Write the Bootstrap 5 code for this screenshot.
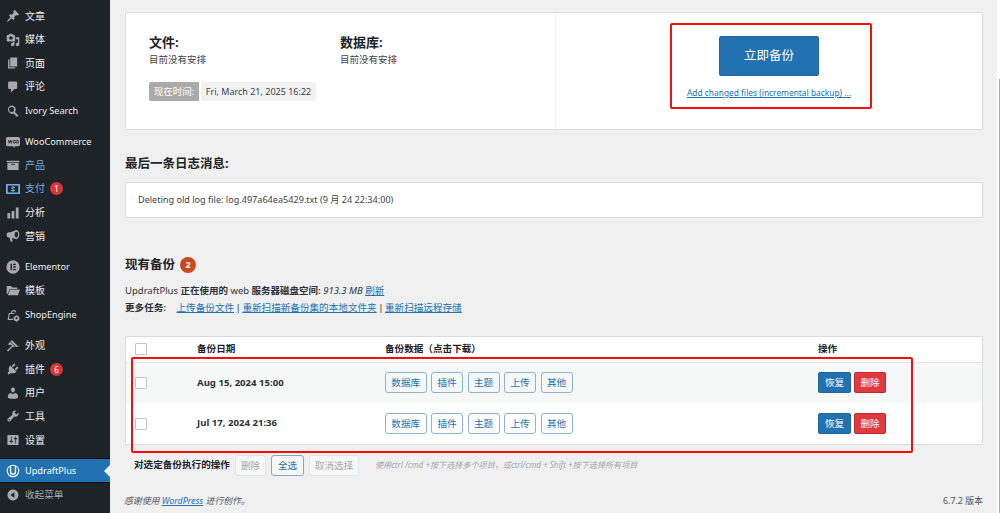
<!DOCTYPE html>
<html lang="zh-CN">
<head>
<meta charset="utf-8">
<title>UpdraftPlus</title>
<link href="https://cdn.jsdelivr.net/npm/bootstrap@5.3.0/dist/css/bootstrap.min.css" rel="stylesheet">
<style>
html,body{height:513px;overflow:hidden}
body{background:#f0f0f1;color:#3c434a;font:9.6px/1.3 "Noto Sans","Noto Sans CJK SC",sans-serif}
a{color:#2271b1}
.wp-side{width:110px;height:513px;flex:none;background:#1d2327;padding-top:4.4px;overflow:hidden}
.side-row{height:23.6px;flex:none;color:#f0f0f1;font-size:10px;text-decoration:none;padding-left:6px;gap:5px;position:relative;white-space:nowrap}
.side-row svg{width:14px;height:14px;fill:#a7aaad;flex:none}
.side-row.hue{color:#72aee6}
.side-row.hue-ico svg{fill:#72aee6}
.side-row .latin-name{font-size:9.2px}
.side-gap{height:7.6px;flex:none}
.side-row.now{background:#2271b1;color:#fff;box-shadow:0 -1px 0 #0c0f11,0 1px 0 #0c0f11;margin-top:-.6px}
.side-row.now svg{fill:#fff}
.side-row.now::after{content:"";position:absolute;right:0;top:6px;border:6px solid transparent;border-right-color:#f0f0f1;border-left:0}
.side-row.fold{color:#a7aaad;font-size:9.6px;margin-top:.6px}
.side-num{background:#d63638;color:#fff;width:13px;height:13px;border-radius:50%;font-size:8px;line-height:13px;text-align:center;margin-left:0}
.wp-body{width:887px;flex:none;padding:12px 14px 0 15px;position:relative}
.scroll-strip{width:3px;flex:none;background:#fff;padding-left:2px}
.scroll-thumb{height:434px;margin-top:79px;background:#a9a9a9}
.top-panel{height:118px;border:1px solid #dcdcde;border-radius:1px;background:#fff}
.top-left{width:430px;flex:none;padding:20px 23px;border-right:1px solid #f3f3f3}
.sched-col{width:191px}
.sched-title{font-size:13px;line-height:18px;font-weight:700;color:#1d2327}
.sched-sub{line-height:16px;font-size:9.5px;margin-top:1px}
.time-pill{margin-top:14px;height:19px;line-height:19px;font-size:9px;gap:2px}
.time-tag{background:#aaa;color:#fff;width:50px;text-align:center;border-radius:2px 0 0 2px;font-size:9.5px}
.time-val{background:#f1f1f1;width:115px;text-align:center;border-radius:0 2px 2px 0}
.top-right{padding-top:23px}
.now-btn{width:100px;height:40px;background:#2271b1;border:1px solid #1b669f;border-radius:2px;color:#fff;font-size:12.5px;line-height:38px;padding:0}
.now-link{margin-top:10px;line-height:13px;font-size:8.4px;white-space:nowrap}
.sect-h{font-size:12.5px;line-height:16px;font-weight:700;color:#1d2327;margin:0}
.log-h{margin-top:26px}
.log-box{margin-top:10px;height:36px;background:#fff;border:1px solid #dcdcde;padding:0 12px;line-height:34px;font-size:9.1px}
.have-h{margin-top:39px;font-size:12.5px;height:16px;gap:5px}
.have-num{width:16px;height:16px;border-radius:50%;background:#ca4a1f;color:#fff;font-size:9px;line-height:16px;text-align:center;font-weight:700}
.disk-line{margin-top:10px;line-height:16px;color:#2c3338;font-size:9.5px}
.disk-line b{font-weight:600}
.task-line{line-height:17px;color:#2c3338;font-size:9.6px;word-spacing:-1px}
.task-line b{font-weight:600;margin-right:9px}
.bk-wrap{margin-top:20px;background:#fff;border:1px solid #dcdcde;height:109px}
.bk-table{table-layout:fixed;margin:0;--bs-table-bg:transparent;width:100%;font-size:9.6px;color:#2c3338}
.bk-table th,.bk-table td{padding:0;vertical-align:middle;border:0;background:transparent;box-shadow:none}
.bk-table thead tr{height:25px;border-bottom:1px solid #e4e4e4}
.bk-table th{font-weight:600;color:#1d2327}
.bk-table th:first-child,.bk-table td:first-child{padding-left:9px}
.bk-table tbody tr{height:41px}
.bk-table tbody tr.shade{background:#f6f7f7}
.bk-date{font-weight:700;font-size:9.6px}
.box-tick{width:12px;height:12px;border:1px solid #c3c4c7;border-radius:1px;background:#fff;display:block}
.btn-line{gap:4.5px}
.part-btn{height:21px;border:1px solid #88b3d4;border-radius:3px;background:#f6f7f7;color:#2271b1;font-size:9.6px;line-height:19px;padding:0;width:32px;text-align:center}
.part-btn.wide{width:41.5px}
tr:not(.shade) .part-btn{background:#fff}
.act-pair{gap:3px}
.act-btn{height:21px;width:33px;padding:0;border-radius:2px;color:#fff;font-size:9.6px;line-height:19px}
.act-blue{background:#2271b1;border:1px solid #1b669f}
.act-red{background:#df3a3f;border:1px solid #c4272c;width:32px}
.bulk-line{margin-top:10px;padding-left:9px;height:21px;white-space:nowrap}
.bulk-name{font-weight:600;color:#1d2327;width:101px;font-size:9.6px}
.bulk-btn{height:21px;padding:0;font-size:9.6px;line-height:19px;border-radius:3px;text-align:center;background:#f6f7f7;border:1px solid #e4e5e6;color:#a7aaad;margin-right:5px}
.bulk-go{background:#f6f7f7;border-color:#7fa9ca;color:#2271b1}
.bulk-hint{color:#a0a5aa;font-style:italic;font-size:8.1px;margin-left:11px}
.wp-foot{margin-top:19px;margin-left:-1px;font-size:8.9px;font-style:italic;color:#50575e}
.wp-foot span:last-child{font-style:normal}
.mark-box{position:absolute;border:2px solid #f60d0d;border-radius:2px;pointer-events:none}
.mark-a{left:560px;top:23px;width:202px;height:86px}
.mark-b{left:21px;top:357px;width:782px;height:96px}
</style>
</head>
<body class="d-flex m-0">
<nav class="wp-side d-flex flex-column">
<a class="side-row d-flex align-items-center"><svg viewBox="0 0 20 20"><path d="M10.44 3.02l1.82-1.82 6.36 6.35-1.83 1.82c-1.05-.68-2.48-.57-3.41.36l-.75.75c-.92.93-1.04 2.35-.35 3.41l-1.83 1.82-2.41-2.41-2.8 2.79c-.42.42-3.38 2.71-3.8 2.29s1.86-3.39 2.28-3.81l2.79-2.79L4.1 9.36l1.83-1.82c1.05.69 2.48.57 3.4-.36l.75-.75c.93-.92 1.05-2.35.36-3.41z"/></svg><span>文章</span></a>
<a class="side-row d-flex align-items-center"><svg viewBox="0 0 20 20"><path d="M13 11V4c0-.55-.45-1-1-1h-1.67L9 1H5L3.67 3H2c-.55 0-1 .45-1 1v7c0 .55.45 1 1 1h10c.55 0 1-.45 1-1zM7 4.5c1.38 0 2.5 1.12 2.5 2.5S8.38 9.5 7 9.5 4.5 8.38 4.5 7 5.62 4.5 7 4.5zM14 6h5v10.5c0 1.38-1.12 2.5-2.5 2.5S14 17.88 14 16.5s1.12-2.5 2.5-2.5c.17 0 .34.02.5.05V9h-3V6zm-4 8.05V13h2v3.5c0 1.38-1.12 2.5-2.5 2.5S7 17.88 7 16.5 8.12 14 9.5 14c.17 0 .34.02.5.05z"/></svg><span>媒体</span></a>
<a class="side-row d-flex align-items-center"><svg viewBox="0 0 20 20"><path d="M6 15V2h10v13H6zm-1 1h8v2H3V5h2v11z"/></svg><span>页面</span></a>
<a class="side-row d-flex align-items-center"><svg viewBox="0 0 20 20"><path d="M5 2h9c1.1 0 2 .9 2 2v7c0 1.1-.9 2-2 2h-2l-5 5v-5H5c-1.1 0-2-.9-2-2V4c0-1.1.9-2 2-2z"/></svg><span>评论</span></a>
<a class="side-row d-flex align-items-center"><svg viewBox="0 0 20 20"><path d="M8 2a6 6 0 0 1 4.8 9.6l5 5-2 2-5-5A6 6 0 1 1 8 2zm0 2.4a3.6 3.6 0 1 0 0 7.2 3.6 3.6 0 0 0 0-7.2z"/></svg><span class="latin-name">Ivory Search</span></a>
<div class="side-gap"></div>
<a class="side-row d-flex align-items-center"><svg viewBox="0 0 20 20"><path fill-rule="evenodd" d="M2.5 3h15A2.5 2.5 0 0 1 20 5.5v8a2.5 2.5 0 0 1-2.5 2.5H12l1 2.5L9.500 16h-7A2.500 2.500 0 0 1 0 13.500v-8A2.500 2.500 0 0 1 2.500 3zM3 7l1 5h1l1-3 1 3h1l1-5H8l-.6 3L6.500 7h-1l-.9 3L4 7zm9 0a2.500 2.500 0 1 0 0 5 2.500 2.500 0 0 0 0-5zm0 1.300a1.200 1.200 0 1 1 0 2.400 1.200 1.200 0 0 1 0-2.400zM16 7a2.500 2.500 0 1 0 0 5 2.500 2.500 0 0 0 0-5zm0 1.300a1.200 1.200 0 1 1 0 2.400 1.200 1.200 0 0 1 0-2.400z"/></svg><span class="latin-name">WooCommerce</span></a>
<a class="side-row hue d-flex align-items-center"><svg viewBox="0 0 20 20"><path d="M19 4v2H1V4h18zM2 7h16v10H2V7zm11 3V9H7v1h6z"/></svg><span>产品</span></a>
<a class="side-row hue hue-ico d-flex align-items-center"><svg viewBox="0 0 20 20"><path fill-rule="evenodd" d="M1 3h18a1 1 0 0 1 1 1v12a1 1 0 0 1-1 1H1a1 1 0 0 1-1-1V4a1 1 0 0 1 1-1zm1.500 2v10h15V5zM9.200 5.800h1.600v1a3 3 0 0 1 2.200 1l-1 1a2 2 0 0 0-1.800-.6c-.9.100-1 .9-.2 1.200l1.400.5c1.700.6 1.700 3-.6 3.400v.9H9.200v-.9a3.500 3.500 0 0 1-2.400-1.200l1.100-1a2.300 2.300 0 0 0 2 .8c1 0 1.100-.9.300-1.200l-1.400-.5c-1.700-.6-1.600-3 .4-3.400z"/></svg><span>支付</span><span class="side-num">1</span></a>
<a class="side-row d-flex align-items-center"><svg viewBox="0 0 20 20"><path d="M18 18V2h-4v16h4zm-6 0V7H8v11h4zm-6 0v-8H2v8h4z"/></svg><span>分析</span></a>
<a class="side-row d-flex align-items-center"><svg viewBox="0 0 20 20"><path fill-rule="evenodd" d="M14.500 1.500c2.500 0 4.500 3 4.500 6.500s-2 6.500-4.500 6.500c-.6 0-1.200-.2-1.700-.5L8.500 12.700l1.300 5.300H6.500L5 12H3.500A3 3 0 0 1 1 9V7.500A3 3 0 0 1 3.500 4.500h3L12.800 2c.5-.3 1.100-.5 1.700-.5zm.3 2.300c-1.400 0-2.500 1.900-2.500 4.200s1.100 4.200 2.500 4.200 2.500-1.900 2.500-4.200-1.100-4.200-2.500-4.200z"/></svg><span>营销</span></a>
<div class="side-gap"></div>
<a class="side-row d-flex align-items-center"><svg viewBox="0 0 20 20"><path fill-rule="evenodd" d="M10 .5a9.500 9.500 0 1 1 0 19 9.500 9.500 0 0 1 0-19zM6.500 5.500v9h2v-9zm3.500 0v1.800h4V5.500zm0 3.600v1.800h4V9.100zm0 3.600v1.800h4v-1.800z"/></svg><span class="latin-name">Elementor</span></a>
<a class="side-row d-flex align-items-center"><svg viewBox="0 0 20 20"><path d="M1 3h6l2 2h7v2H5.500L2.500 14H1zM6 8h14l-3 8H2.500z"/></svg><span>模板</span></a>
<a class="side-row d-flex align-items-center"><svg viewBox="0 0 20 20"><path fill-rule="evenodd" d="M7 7a4 4 0 0 1 7.900-.9L13.400 6.500A2.500 2.500 0 0 0 8.500 7H12v1.500H5.500L4 15.500h6v1.500H2.200L4 7zM15 10l1 1.300 1.600-.2.400 1.600 1.500.7-.6 1.600.6 1.500-1.500.800-.4 1.500-1.600-.1-1 1.300-1-1.300-1.600.1-.4-1.500-1.500-.8.600-1.500-.6-1.600 1.500-.7.400-1.600 1.600.2zm0 3a1.500 1.500 0 1 0 0 3 1.500 1.500 0 0 0 0-3z"/></svg><span class="latin-name">ShopEngine</span></a>
<div class="side-gap"></div>
<a class="side-row d-flex align-items-center"><svg viewBox="0 0 20 20"><path d="M8.500 1.500l8 8c1 .2 2 .1 3-.2-1.500 1.800-3.700 2.400-5.300 1.700L6.500 3.400zM5.800 4l6.900 6.900-1.300 1.300-1.600-1.600L3 18l-1.700-1.700 7.200-6.600-2-2-1.200 1.200L3 7.500z"/></svg><span>外观</span></a>
<a class="side-row d-flex align-items-center"><svg viewBox="0 0 20 20"><path d="M13.110 4.360L9.870 7.600 8 5.730l3.240-3.240c.35-.34 1.050-.2 1.560.32.520.51.660 1.210.310 1.550zm-8 1.770l.91-1.120 9.010 9.010-1.190.84c-.71.710-2.630 1.160-3.820 1.160H6.140L4.900 17.260c-.59.590-1.540.59-2.120 0-.59-.58-.59-1.530 0-2.120l1.240-1.240v-3.880c0-1.130.4-3.190 1.090-3.890zm7.260 3.970l3.240-3.240c.34-.35 1.040-.21 1.550.31.520.51.660 1.210.310 1.550l-3.240 3.250z"/></svg><span>插件</span><span class="side-num">6</span></a>
<a class="side-row d-flex align-items-center"><svg viewBox="0 0 20 20"><path d="M10 9.250c-2.270 0-2.730-3.440-2.730-3.440C7 4.020 7.820 2 9.970 2c2.160 0 2.980 2.020 2.710 3.810 0 0-.41 3.440-2.680 3.440zm0 2.570L12.720 10c2.390 0 4.520 2.330 4.520 4.530v2.490s-3.650 1.130-7.240 1.130c-3.650 0-7.240-1.130-7.240-1.130v-2.490c0-2.250 1.940-4.480 4.470-4.480z"/></svg><span>用户</span></a>
<a class="side-row d-flex align-items-center"><svg viewBox="0 0 20 20"><path d="M16.680 9.770c-1.340 1.340-3.300 1.670-4.950.99l-5.410 6.520c-.99.990-2.590.99-3.580 0s-.99-2.590 0-3.570l6.520-5.420c-.68-1.650-.35-3.610.99-4.950 1.280-1.280 3.120-1.620 4.720-1.060l-2.890 2.890 2.820 2.820 2.860-2.870c.53 1.580.18 3.390-1.080 4.650zM3.810 16.210c.4.390 1.040.39 1.430 0 .4-.4.4-1.040 0-1.430-.39-.4-1.030-.4-1.430 0-.39.39-.39 1.030 0 1.430z"/></svg><span>工具</span></a>
<a class="side-row d-flex align-items-center"><svg viewBox="0 0 20 20"><path d="M18 16V4c0-.55-.45-1-1-1H3c-.55 0-1 .45-1 1v12c0 .55.45 1 1 1h14c.55 0 1-.45 1-1zM8 11h1c.55 0 1 .45 1 1s-.45 1-1 1H8v1.500c0 .28-.22.5-.5.5s-.5-.22-.5-.5V13H6c-.55 0-1-.45-1-1s.45-1 1-1h1V5.500c0-.28.22-.5.5-.5s.5.22.5.5V11zm5-2h-1c-.55 0-1-.45-1-1s.45-1 1-1h1V5.500c0-.28.22-.5.5-.5s.5.22.5.5V7h1c.55 0 1 .45 1 1s-.45 1-1 1h-1v5.500c0 .28-.22.5-.5.5s-.5-.22-.5-.5V9z"/></svg><span>设置</span></a>
<div class="side-gap"></div>
<a class="side-row now d-flex align-items-center"><svg viewBox="0 0 20 20"><path fill-rule="evenodd" d="M10 1a9 9 0 1 1 0 18 9 9 0 0 1 0-18zM5.500 3.700A7.500 7.500 0 1 0 14.500 3.700v7.300a4.500 4.500 0 0 1-9 0zM7.500 3v8a2.500 2.500 0 0 0 5 0V3a7.500 7.500 0 0 0-5 0z"/></svg><span class="latin-name">UpdraftPlus</span></a>
<a class="side-row fold d-flex align-items-center"><svg viewBox="0 0 20 20"><path d="M10 2.160c4.330 0 7.840 3.510 7.840 7.840s-3.510 7.840-7.840 7.840S2.160 14.330 2.160 10 5.710 2.160 10 2.160zm2 11.720V6.120L6.180 9.970z"/></svg><span>收起菜单</span></a>
</nav>

<main class="wp-body">
<section class="top-panel d-flex">
<div class="top-left">
<div class="d-flex">
<div class="sched-col"><div class="sched-title">文件:</div><div class="sched-sub">目前没有安排</div></div>
<div class="sched-col"><div class="sched-title">数据库:</div><div class="sched-sub">目前没有安排</div></div>
</div>
<div class="time-pill d-flex"><span class="time-tag">现在时间:</span><span class="time-val">Fri, March 21, 2025 16:22</span></div>
</div>
<div class="top-right flex-grow-1 d-flex flex-column align-items-center">
<button type="button" class="btn now-btn">立即备份</button>
<a href="#" class="now-link">Add changed files (incremental backup) ...</a>
</div>
</section>

<h2 class="sect-h log-h">最后一条日志消息:</h2>
<div class="log-box">Deleting old log file: log.497a64ea5429.txt (9 月 24 22:34:00)</div>

<h2 class="sect-h have-h d-flex align-items-center"><span>现有备份</span><span class="have-num">2</span></h2>
<div class="disk-line">UpdraftPlus <b>正在使用的</b> web <b>服务器磁盘空间:</b> <i>913.3 MB</i> <a href="#">刷新</a></div>
<div class="task-line"><b>更多任务:</b> <a href="#">上传备份文件</a> | <a href="#">重新扫描新备份集的本地文件夹</a> | <a href="#">重新扫描远程存储</a></div>

<div class="bk-wrap">
<table class="table bk-table">
<colgroup><col style="width:71px"><col style="width:188px"><col style="width:433px"><col></colgroup>
<thead><tr><th><span class="box-tick"></span></th><th>备份日期</th><th>备份数据（点击下载）</th><th>操作</th></tr></thead>
<tbody>
<tr class="shade"><td><span class="box-tick"></span></td><td class="bk-date">Aug 15, 2024 15:00</td><td><div class="btn-line d-flex"><button type="button" class="btn part-btn wide">数据库</button><button type="button" class="btn part-btn">插件</button><button type="button" class="btn part-btn">主题</button><button type="button" class="btn part-btn">上传</button><button type="button" class="btn part-btn">其他</button></div></td><td><div class="act-pair d-flex"><button type="button" class="btn act-btn act-blue">恢复</button><button type="button" class="btn act-btn act-red">删除</button></div></td></tr>
<tr><td><span class="box-tick"></span></td><td class="bk-date">Jul 17, 2024 21:36</td><td><div class="btn-line d-flex"><button type="button" class="btn part-btn wide">数据库</button><button type="button" class="btn part-btn">插件</button><button type="button" class="btn part-btn">主题</button><button type="button" class="btn part-btn">上传</button><button type="button" class="btn part-btn">其他</button></div></td><td><div class="act-pair d-flex"><button type="button" class="btn act-btn act-blue">恢复</button><button type="button" class="btn act-btn act-red">删除</button></div></td></tr>
</tbody>
</table>
</div>

<div class="bulk-line d-flex align-items-center">
<span class="bulk-name">对选定备份执行的操作</span>
<span class="bulk-btn" style="width:31px">删除</span>
<span class="bulk-btn bulk-go" style="width:33px">全选</span>
<span class="bulk-btn" style="width:50px">取消选择</span>
<span class="bulk-hint">使用ctrl /cmd +按下选择多个项目，或ctrl/cmd + Shift +按下选择所有项目</span>
</div>

<footer class="wp-foot d-flex justify-content-between"><span>感谢使用 <a href="#">WordPress</a> 进行创作。</span><span>6.7.2 版本</span></footer>

<div class="mark-box mark-a"></div>
<div class="mark-box mark-b"></div>
</main>
<div class="scroll-strip"><div class="scroll-thumb"></div></div>
</body>
</html>
